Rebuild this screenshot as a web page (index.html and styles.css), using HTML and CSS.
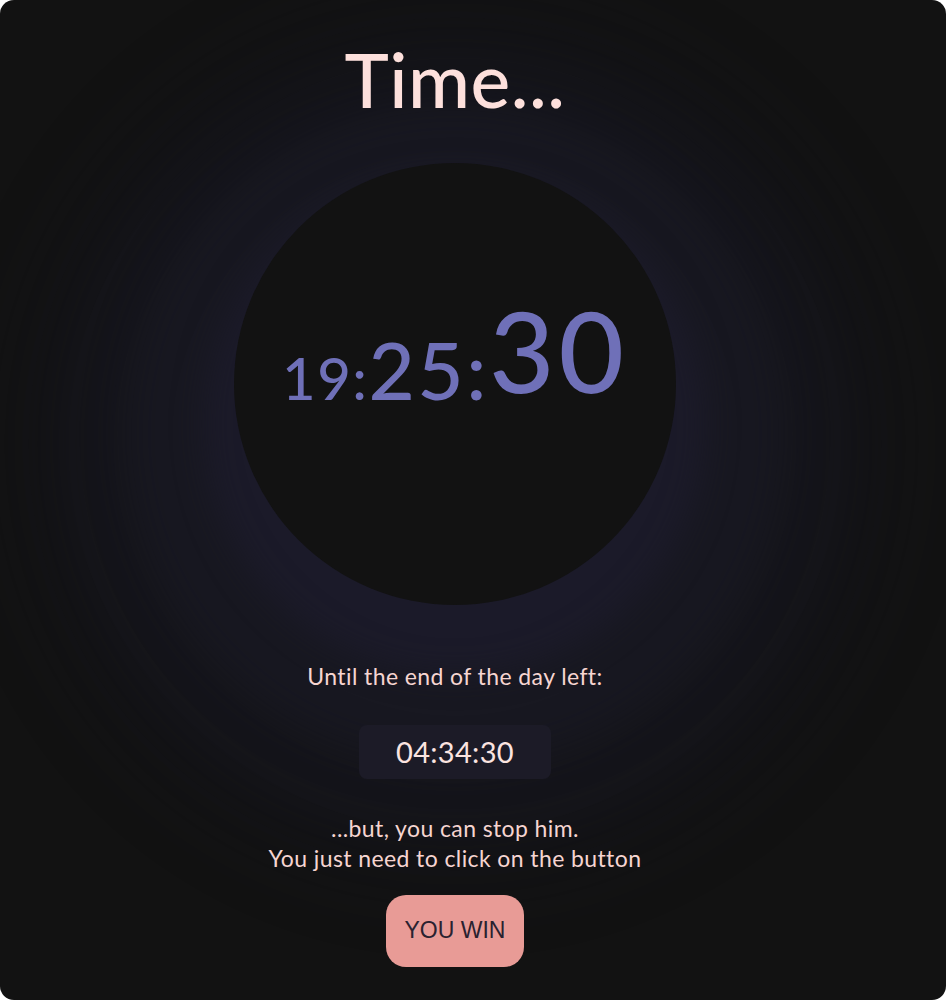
FILE: index.html
```html
<!DOCTYPE html>
<html lang="en">
<head>
<meta charset="utf-8">
<title>Time...</title>
<link rel="stylesheet" href="styles.css">
</head>
<body>
<main class="card">
  <h1 class="title">Time...</h1>
  <div class="dial">
    <div class="clock"><span class="hh">19:</span><span class="mm">25:</span><span class="ss">30</span></div>
  </div>
  <p class="label">Until the end of the day left:</p>
  <div class="remain">04:34:30</div>
  <p class="msg">...but, you can stop him.<br>You just need to click on the button</p>
  <button class="win" type="button">YOU WIN</button>
</main>
</body>
</html>
```

FILE: styles.css
```css
html, body {
  margin: 0;
  padding: 0;
  background: #ffffff;
}

.card {
  box-sizing: border-box;
  width: 946px;
  height: 1000px;
  border-radius: 14px;
  background: #121212;
  overflow: hidden;
  display: flex;
  flex-direction: column;
  align-items: center;
  padding-right: 36px;
  font-family: "Lato", "Noto Sans", sans-serif;
  color: #f6d5d1;
}

.title {
  position: relative;
  z-index: 1;
  margin: 42px 0 0;
  font-size: 75px;
  line-height: 1;
  font-weight: 500;
  color: #fde0dc;
  letter-spacing: 0.5px;
}

.dial {
  margin-top: 46px;
  width: 442px;
  height: 442px;
  flex: none;
  border-radius: 50%;
  background: #121212;
  display: flex;
  align-items: center;
  justify-content: center;
  box-shadow:
    0 40px 30px 30px rgba(30, 28, 46, 0.6),
    0 50px 40px 110px rgba(30, 28, 46, 0.38),
    0 60px 50px 180px rgba(30, 28, 46, 0.24),
    0 60px 60px 240px rgba(30, 28, 46, 0.13);
}

.clock {
  position: relative;
  z-index: 1;
  color: #6f70b8;
  line-height: 1;
  white-space: nowrap;
  margin-bottom: 66px;
  font-weight: 500;
}

.hh { font-size: 58px; letter-spacing: 1.5px; }
.mm { font-size: 80px; letter-spacing: 2.5px; }
.ss { font-size: 113px; letter-spacing: 4px; vertical-align: 7px; }

.label {
  position: relative;
  z-index: 1;
  margin: 58px 0 0;
  font-size: 23px;
  line-height: 1.2;
  letter-spacing: 0.4px;
}

.remain {
  position: relative;
  z-index: 1;
  margin-top: 34px;
  box-sizing: border-box;
  width: 192px;
  height: 54px;
  border-radius: 8px;
  background: #1c1b27;
  display: flex;
  align-items: center;
  justify-content: center;
  font-size: 29px;
  color: #fbe4e0;
  letter-spacing: 0.3px;
}

.msg {
  position: relative;
  z-index: 1;
  margin: 34px 0 0;
  font-size: 23px;
  line-height: 30px;
  text-align: center;
  letter-spacing: 0.4px;
}

.win {
  position: relative;
  z-index: 1;
  margin-top: 22px;
  width: 138px;
  height: 72px;
  border: 0;
  border-radius: 20px;
  background: #e89b96;
  color: #2a2230;
  font-family: "Liberation Sans", Arial, sans-serif;
  font-size: 23px;
  padding: 0;
}
```
